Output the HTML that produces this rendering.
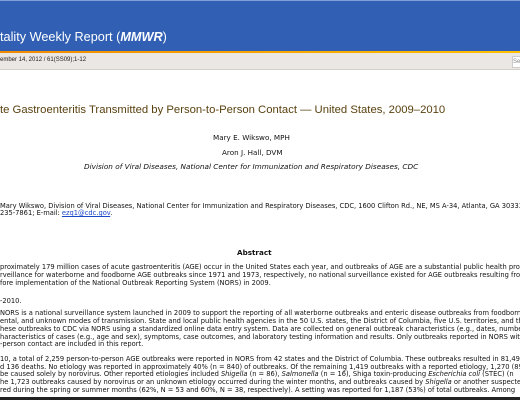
<!DOCTYPE html>
<html><head><meta charset="utf-8"><style>
*{margin:0;padding:0}
body{width:520px;height:400px;overflow:hidden;position:relative;background:#fff;font-family:"DejaVu Sans","Liberation Sans",sans-serif;}
.hdr{position:absolute;left:0;top:0;width:520px;height:51px;background:#305fb4;border-top:1px solid #7f9fd8;box-sizing:border-box}
.hdr span{position:absolute;left:0;top:29px;font:12.7px "Liberation Sans",sans-serif;color:#fff;white-space:nowrap}
.or{position:absolute;left:0;top:51px;width:520px;height:2px;background:linear-gradient(90deg,#f08a00,#ffc000)}
.bar{position:absolute;left:0;top:53px;width:520px;height:16px;background:#ebe7e4;border-bottom:1px solid #d4d0cc}
.bar span{position:absolute;left:0;top:4px;font:6px "Liberation Sans",sans-serif;color:#222;white-space:nowrap}
.srch{position:absolute;left:512px;top:3px;width:12px;height:10px;background:#fff;border:1px solid #ccc;font:6px "Liberation Sans",sans-serif;color:#888;line-height:10px}
.l{position:absolute;left:0;white-space:nowrap;font-size:6.7px;color:#111;line-height:8px}
a{color:#1a47c8}
.t{position:absolute;left:0;top:104px;font:11.3px "Liberation Sans",sans-serif;color:#5a4210;white-space:nowrap}
</style></head><body>
<div class="hdr"><span>tality Weekly Report (<b><i>MMWR</i></b>)</span></div>
<div class="or"></div>
<div class="bar"><span>ember 14, 2012 / 61(SS09);1-12</span><div class="srch">Se</div></div>
<div class="t">te Gastroenteritis Transmitted by Person-to-Person Contact — United States, 2009–2010</div>
<div class="l" style="left:213px;top:134px;font-size:7.2px">Mary E. Wikswo, MPH</div>
<div class="l" style="left:222px;top:149px;font-size:7.2px">Aron J. Hall, DVM</div>
<div class="l" style="left:84px;top:163px;font-style:italic;font-size:7.3px">Division of Viral Diseases, National Center for Immunization and Respiratory Diseases, CDC</div>
<div class="l" style="top:202px">Mary Wikswo, Division of Viral Diseases, National Center for Immunization and Respiratory Diseases, CDC, 1600 Clifton Rd., NE, MS A-34, Atlanta, GA 30333</div>
<div class="l" style="top:209px">235-7861; E-mail: <a href="#">ezq1@cdc.gov</a>.</div>
<div class="l" style="left:237px;top:249px;font-weight:bold;font-size:7.2px">Abstract</div>
<div class="l" style="top:263px">proximately 179 million cases of acute gastroenteritis (AGE) occur in the United States each year, and outbreaks of AGE are a substantial public health problem</div>
<div class="l" style="top:271px">rveillance for waterborne and foodborne AGE outbreaks since 1971 and 1973, respectively, no national surveillance existed for AGE outbreaks resulting from</div>
<div class="l" style="top:279px">fore implementation of the National Outbreak Reporting System (NORS) in 2009.</div>
<div class="l" style="top:297px">-2010.</div>
<div class="l" style="top:309px">NORS is a national surveillance system launched in 2009 to support the reporting of all waterborne outbreaks and enteric disease outbreaks from foodborne</div>
<div class="l" style="top:317px">ental, and unknown modes of transmission. State and local public health agencies in the 50 U.S. states, the District of Columbia, five U.S. territories, and the</div>
<div class="l" style="top:325px">hese outbreaks to CDC via NORS using a standardized online data entry system. Data are collected on general outbreak characteristics (e.g., dates, number</div>
<div class="l" style="top:333px">haracteristics of cases (e.g., age and sex), symptoms, case outcomes, and laboratory testing information and results. Only outbreaks reported in NORS with</div>
<div class="l" style="top:340px">-person contact are included in this report.</div>
<div class="l" style="top:355px">10, a total of 2,259 person-to-person AGE outbreaks were reported in NORS from 42 states and the District of Columbia. These outbreaks resulted in 81,491</div>
<div class="l" style="top:363px">d 136 deaths. No etiology was reported in approximately 40% (n = 840) of outbreaks. Of the remaining 1,419 outbreaks with a reported etiology, 1,270 (89%)</div>
<div class="l" style="top:370px"> be caused solely by norovirus. Other reported etiologies included <i>Shigella</i> (n = 86), <i>Salmonella</i> (n = 16), Shiga toxin-producing <i>Escherichia coli</i> (STEC) (n</div>
<div class="l" style="top:378px">he 1,723 outbreaks caused by norovirus or an unknown etiology occurred during the winter months, and outbreaks caused by <i>Shigella</i> or another suspected</div>
<div class="l" style="top:386px">red during the spring or summer months (62%, N = 53 and 60%, N = 38, respectively). A setting was reported for 1,187 (53%) of total outbreaks. Among</div>
<div style="position:absolute;left:0;top:397px;width:520px;height:3px;background:#222"></div>
</body></html>
